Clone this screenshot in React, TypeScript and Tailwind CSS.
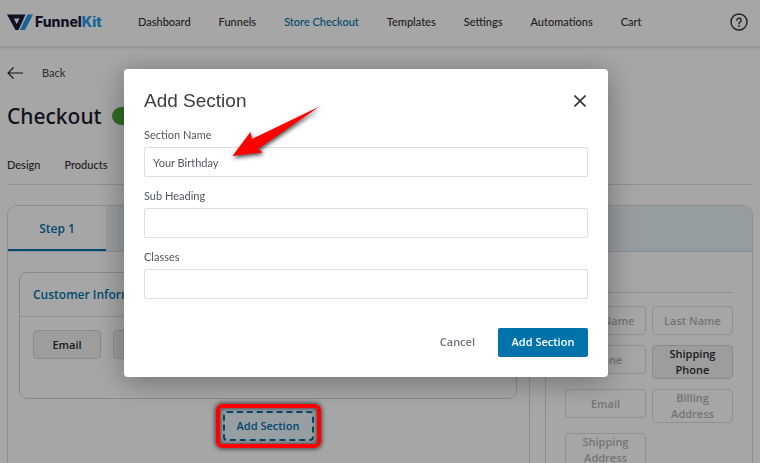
import { ReactNode } from "react";

const navItems = ["Dashboard", "Funnels", "Store Checkout", "Templates", "Settings", "Automations", "Cart"];

const availableFields = [
  { label: "First Name", used: true },
  { label: "Last Name", used: true },
  { label: "Phone", used: true },
  { label: "Shipping Phone", used: false },
  { label: "Email", used: true },
  { label: "Billing Address", used: true },
  { label: "Shipping Address", used: true },
];

function Logo() {
  return (
    <a href="#" aria-label="FunnelKit" className="flex items-center gap-0.5 leading-5 font-extrabold">
      <svg viewBox="0 0 26 17" className="h-[17px] w-[26px]" aria-hidden="true">
        <path d="M0 0.5H14.500L12.500 4.500H6.800L9.800 10L14.500 0.500H18.500L11.500 16H8.500Z" fill="#1d1a38" />
        <path d="M20.5 0.5H26L18 16H13Z" fill="#1d9ce6" />
      </svg>
      <span className="font-['Inter',sans-serif] text-sm text-[#1d1a38]">
        Funnel<span className="text-[#1d9ce6]">Kit</span>
      </span>
    </a>
  );
}

function Header() {
  return (
    <header className="flex h-[47px] shrink-0 items-center border-b border-[#ececec] bg-white pr-3 pb-0.5 pl-[7px] shadow-sm">
      <div className="w-[131px] shrink-0">
        <Logo />
      </div>
      <nav className="flex flex-1 gap-7 text-[11px] font-medium whitespace-nowrap text-[#353030]">
        {navItems.map((item) => (
          <a key={item} href="#" className={item === "Store Checkout" ? "text-[#0073aa]" : ""}>
            {item}
          </a>
        ))}
      </nav>
      <button type="button" aria-label="Help">
        <svg viewBox="0 0 18 18" className="size-[18px]" fill="none" stroke="#353030" strokeWidth="1.4" strokeLinecap="round">
          <circle cx="9" cy="9" r="8" />
          <path d="M6.9 7.3a2.1 2.1 0 1 1 3.2 1.8c-.8.5-1.1.8-1.1 1.6" />
          <circle cx="9" cy="12.9" r="0.3" />
        </svg>
      </button>
    </header>
  );
}

function PageTop() {
  return (
    <div className="shrink-0 px-[7px]">
      <a href="#" className="mt-4 flex h-5 items-center gap-[19px] text-[11px] text-[#444]">
        <svg viewBox="0 0 16 12" className="h-3 w-4" fill="none" stroke="#222" strokeWidth="1.1" aria-hidden="true">
          <path d="M16 6H1M6.5 0.5L1 6l5.500 5.500" />
        </svg>
        Back
      </a>
      <div className="mt-[19px] flex h-7 items-center gap-2.5">
        <h1 className="font-['Noto_Sans',sans-serif] text-[21px] leading-7 font-medium text-[#1d1a2b]">Checkout</h1>
        <button type="button" role="switch" aria-checked="true" aria-label="Checkout enabled" className="flex h-[18px] w-10 items-center justify-end rounded-full bg-[#4fa63c] px-0.5">
          <span className="size-3.5 rounded-full bg-white" />
        </button>
      </div>
      <nav className="mt-[25px] flex h-[30px] gap-6 border-b border-[#dedfe2] pt-0.5 text-[11px] leading-4 font-medium text-[#353030]">
        <a href="#">Design</a>
        <a href="#">Products</a>
      </nav>
    </div>
  );
}

function FieldChip({ used, children }: { used: boolean; children: ReactNode }) {
  const look = used ? "border-[#dcdde2] text-[#b3b3b6]" : "border-[#d3d5dc] bg-[#f1f1f2] text-[#2b2b33]";
  return (
    <button type="button" className={`flex min-h-[29px] items-center justify-center rounded-sm border px-2 text-[11px] leading-4 font-semibold ${look}`}>
      {children}
    </button>
  );
}

function Builder() {
  return (
    <section className="mx-[7px] mt-5 flex flex-1 flex-col rounded-t-[10px] border border-b-0 border-[#d9dbe1] font-['Open_Sans','Noto_Sans',sans-serif]">
      <div className="flex h-[46px] shrink-0 overflow-hidden rounded-t-[9px] border-b border-[#d9dbe1] bg-[#e7f1f6]">
        <button type="button" className="w-[98px] border-b-2 border-[#0073aa] bg-white pt-0.5 text-xs font-semibold text-[#0073aa]">
          Step 1
        </button>
      </div>
      <div className="flex flex-1 gap-[15px]">
        <div className="flex flex-1 flex-col items-center border-r border-[#d9dbe1] pt-5 pr-3 pl-[11px]">
          <div className="h-[127px] w-full rounded-lg border border-[#d3d5dc]">
            <h2 className="flex h-11 items-center border-b border-[#d9dbe1] px-[13px] text-xs font-semibold text-[#0073aa]">
              Customer Information
            </h2>
            <div className="flex gap-3 px-[13px] pt-[13px]">
              <div className="grid w-[68px]">
                <FieldChip used={false}>Email</FieldChip>
              </div>
              <div className="grid w-[68px]">
                <FieldChip used={false}>Name</FieldChip>
              </div>
            </div>
          </div>
          <div className="relative mt-3">
            <button type="button" className="h-[30px] w-[91px] rounded-sm border-2 border-dashed border-[#0073aa] bg-[#e9f4f9] text-[11px] font-semibold text-[#0073aa]">
              Add Section
            </button>
            <span className="pointer-events-none absolute -inset-[7px] z-40 rounded-md border-4 border-[#ff0000] shadow-[0_0_4px_1px_rgba(0,0,0,0.6),inset_0_0_4px_1px_rgba(0,0,0,0.6)]" />
          </div>
        </div>
        <div className="w-[207px] shrink-0 border-l border-[#d9dbe1] px-[19px]">
          <h2 className="flex h-[41px] items-center border-b border-[#d9dbe1] text-xs font-semibold">Fields</h2>
          <div className="grid grid-cols-2 items-start gap-x-1.5 gap-y-2.5 pt-[13px]">
            {availableFields.map((field) => (
              <FieldChip key={field.label} used={field.used}>
                {field.label}
              </FieldChip>
            ))}
          </div>
        </div>
      </div>
    </section>
  );
}

function TextField({ id, label, value }: { id: string; label: string; value?: string }) {
  return (
    <div className="flex flex-col gap-1">
      <label htmlFor={id} className="text-[11px] leading-4 text-[#50575e]">
        {label}
      </label>
      <input id={id} type="text" defaultValue={value} className="h-[30px] w-full rounded-xs border border-[#dedfe3] bg-white px-2 text-[11px] text-[#50575e] outline-none" />
    </div>
  );
}

function AddSectionDialog() {
  return (
    <div className="fixed inset-0 z-30 flex items-start justify-center bg-black/35 pt-[69px] pr-7">
      <div role="dialog" aria-labelledby="dialog-title" className="relative w-[484px] rounded-sm bg-white px-5 pt-5 pb-5 shadow-[0_4px_30px_rgba(0,0,0,0.35)]">
        <div className="flex h-6 items-center justify-between">
          <h2 id="dialog-title" className="font-['Liberation_Sans',Arial,sans-serif] text-[19px] text-[#3c3d40]">
            Add Section
          </h2>
          <button type="button" aria-label="Close" className="p-0.5">
            <svg viewBox="0 0 12 12" className="size-3" fill="none" stroke="#353030" strokeWidth="1.6" aria-hidden="true">
              <path d="M0.500 0.500L11.500 11.500M11.500 0.500L0.500 11.500" />
            </svg>
          </button>
        </div>
        <form className="mt-3.5 flex flex-col gap-[11px]">
          <TextField id="section-name" label="Section Name" value="Your Birthday" />
          <TextField id="sub-heading" label="Sub Heading" />
          <TextField id="classes" label="Classes" />
          <div className="mt-[18px] flex justify-end gap-[23px] font-['Open_Sans','Noto_Sans',sans-serif] text-[11px] font-semibold">
            <button type="button" className="text-[#6c737c]">
              Cancel
            </button>
            <button type="button" className="h-[29px] w-[90px] rounded-xs bg-[#0073aa] text-white">
              Add Section
            </button>
          </div>
        </form>
        <svg viewBox="0 0 100 65" className="pointer-events-none absolute top-[29px] left-[101px] h-[65px] w-[100px] overflow-visible drop-shadow-[1px_2px_2px_rgba(0,0,0,0.7)]" aria-hidden="true">
          <path d="M7.500 58L25.500 34L27 41L94.500 8.500L33 51L38 54.500Z" fill="#ff0000" />
        </svg>
      </div>
    </div>
  );
}

export default function App() {
  return (
    <div className="flex h-screen flex-col overflow-hidden bg-white font-['Lato','Open_Sans',sans-serif]">
      <Header />
      <PageTop />
      <Builder />
      <AddSectionDialog />
    </div>
  );
}
